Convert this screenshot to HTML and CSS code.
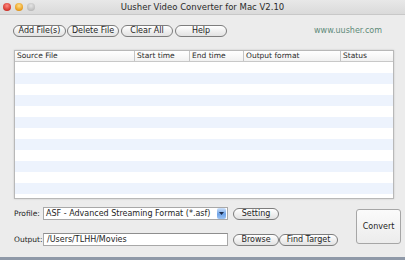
FILE: index.html
```html
<!DOCTYPE html>
<html>
<head>
	<title>Uusher Video Converter for Mac V2.10</title>
	<link rel="stylesheet" href="styles.css">
</head>
<body>
	<div class="window">
		<div class="titlebar">
			<div class="lights">
				<span class="light red"></span>
				<span class="light yellow"></span>
				<span class="light gray"></span>
			</div>
			<div class="title">Uusher Video Converter for Mac V2.10</div>
		</div>

		<div class="toolbar">
			<button class="pill w-add">Add File(s)</button>
			<button class="pill w-del">Delete File</button>
			<button class="pill w-clear">Clear All</button>
			<button class="pill w-help">Help</button>
			<span class="site">www.uusher.com</span>
		</div>

		<div class="table">
			<div class="thead">
				<div class="th c1">Source File</div>
				<div class="th c2">Start time</div>
				<div class="th c3">End time</div>
				<div class="th c4">Output format</div>
				<div class="th c5">Status</div>
			</div>
			<div class="rows">
				<div class="row"></div>
				<div class="row alt"></div>
				<div class="row"></div>
				<div class="row alt"></div>
				<div class="row"></div>
				<div class="row alt"></div>
				<div class="row"></div>
				<div class="row alt"></div>
				<div class="row"></div>
				<div class="row alt"></div>
				<div class="row"></div>
				<div class="row alt"></div>
				<div class="row"></div>
			</div>
		</div>

		<div class="bottom">
			<div class="fields">
				<div class="field">
					<span class="label">Profile:</span>
					<div class="select">
						<span>ASF - Advanced Streaming Format (*.asf)</span>
						<span class="arrow">
							<svg width="5" height="5" viewBox="0 0 5 5"><path d="M0 1 L5 1 L2.5 4 Z" fill="#1a2a4a"/></svg>
						</span>
					</div>
					<button class="pill w-setting">Setting</button>
				</div>
				<div class="field">
					<span class="label">Output:</span>
					<div class="input">/Users/TLHH/Movies</div>
					<button class="pill w-browse">Browse</button>
					<button class="pill w-find">Find Target</button>
				</div>
			</div>
			<button class="convert">Convert</button>
		</div>
	</div>
</body>
</html>
```

FILE: styles.css
```css
body {
	margin: 0;
	padding: 0;
	background-color: #ececec;
	font-family: "DejaVu Sans", "Liberation Sans", sans-serif;
	font-size: 8px;
	color: #1e1e1e;
}

.window {
	width: 405px;
	height: 260px;
	display: flex;
	flex-direction: column;
	box-sizing: border-box;
	border-bottom: 3px solid #8f99a8;
}

.titlebar {
	height: 14px;
	display: flex;
	align-items: center;
	position: relative;
	background: linear-gradient(#e8e8e8, #dadada);
	border-bottom: 1px solid #c8c8c8;
}

.lights {
	display: flex;
	gap: 4px;
	padding-left: 3px;
}

.light {
	width: 8px;
	height: 8px;
	border-radius: 50%;
}

.red { background: radial-gradient(circle at 50% 35%, #ff8a80, #d2332a 70%, #9a1e18); }
.yellow { background: radial-gradient(circle at 50% 35%, #ffe08a, #e89a1a 70%, #b0700e); }
.gray { background: radial-gradient(circle at 50% 35%, #e4e4e4, #bdbdbd 70%, #9c9c9c); }

.title {
	position: absolute;
	left: 0;
	right: 0;
	text-align: center;
	font-size: 8.5px;
	color: #2a2a2a;
}

.toolbar {
	display: flex;
	align-items: center;
	gap: 1px;
	padding: 9px 0 0 13px;
	height: 13px;
}

.pill {
	height: 12px;
	padding: 0;
	border: 1px solid #7d7d7d;
	border-radius: 7px;
	background: linear-gradient(#ffffff, #f0f0f0 50%, #e2e2e2);
	font-family: "DejaVu Sans", "Liberation Sans", sans-serif;
	font-size: 8px;
	color: #1e1e1e;
	line-height: 10px;
	white-space: nowrap;
}

.w-add { width: 53px; }
.w-del { width: 52px; }
.w-clear { width: 52px; margin-left: 1px; }
.w-help { width: 52px; margin-left: 1px; }
.w-setting { width: 46px; margin-left: 5px; }
.w-browse { width: 46px; margin-left: 5px; }
.w-find { width: 59px; }

.site {
	margin-left: auto;
	margin-right: 23px;
	color: #5d8a78;
	font-size: 8px;
}

.table {
	margin: 13px 11px 0 14px;
	height: 149px;
	box-sizing: border-box;
	border: 1px solid #b8b8b8;
	background: #ffffff;
	box-shadow: 0 0 2px rgba(0, 0, 0, 0.15);
	overflow: hidden;
}

.thead {
	display: flex;
	height: 10px;
	border-bottom: 1px solid #c8c8c8;
	background: linear-gradient(#ffffff, #f1f1f1);
}

.th {
	box-sizing: border-box;
	padding-left: 2px;
	font-size: 7.5px;
	line-height: 10px;
	border-right: 1px solid #c4c4c4;
	color: #2a2a2a;
	white-space: nowrap;
}

.c1 { width: 120px; }
.c2 { width: 55px; }
.c3 { width: 54px; }
.c4 { width: 97px; }
.c5 { flex: 1; border-right: none; }

.row {
	height: 11px;
	background: #ffffff;
}

.row.alt {
	background: #edf3fd;
}

.bottom {
	display: flex;
	padding: 8px 0 0 14px;
}

.fields {
	display: flex;
	flex-direction: column;
	gap: 13px;
}

.field {
	display: flex;
	align-items: center;
	height: 13px;
}

.label {
	width: 29px;
	flex-shrink: 0;
	white-space: nowrap;
	font-size: 7.5px;
}

.select {
	width: 185px;
	height: 13px;
	box-sizing: border-box;
	border: 1px solid #a8a8a8;
	background: #ffffff;
	display: flex;
	align-items: center;
	justify-content: space-between;
	padding-left: 2px;
	font-size: 8px;
	white-space: nowrap;
}

.arrow {
	width: 9px;
	height: 11px;
	margin-right: 1px;
	display: flex;
	align-items: center;
	justify-content: center;
	border-radius: 2px;
	background: linear-gradient(#cfe2fb, #6fa4e8 55%, #9cc2f2);
}

.input {
	width: 185px;
	height: 13px;
	box-sizing: border-box;
	border: 1px solid #a8a8a8;
	border-top-color: #8e8e8e;
	background: #ffffff;
	padding-left: 3px;
	line-height: 12px;
	font-size: 8px;
}

.convert {
	margin: 2px 0 0 18px;
	width: 45px;
	height: 35px;
	padding: 0;
	border: 1px solid #a6a6a6;
	border-radius: 3px;
	background: linear-gradient(#fbfbfb, #ececec);
	font-family: "DejaVu Sans", "Liberation Sans", sans-serif;
	font-size: 8px;
	color: #1e1e1e;
}
```
